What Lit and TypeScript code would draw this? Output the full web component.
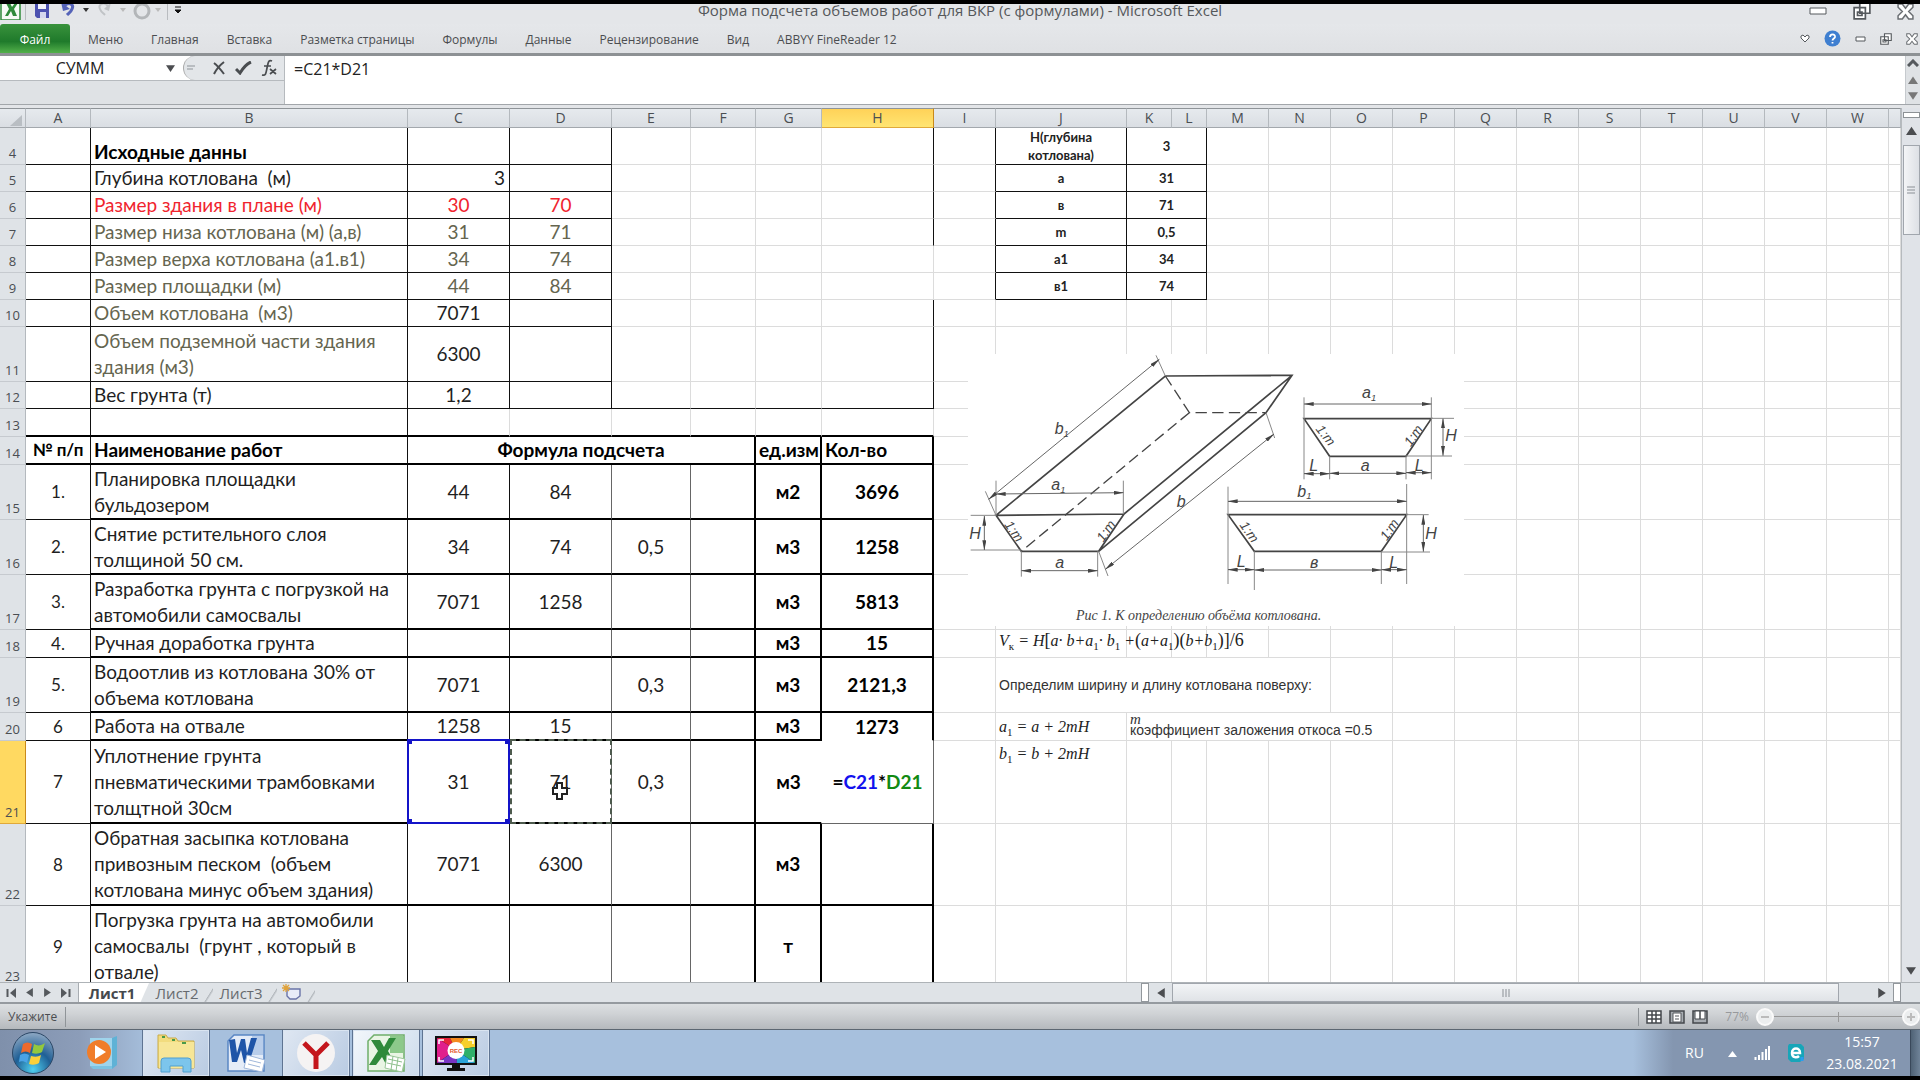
import { LitElement, html, css, svg, nothing } from "lit";
import { customElement } from "lit/decorators.js";

interface Cell {
  col: number;
  span?: number;
  text?: unknown;
  cls?: string;
}
interface Row {
  n: number;
  h: number;
  cells: Cell[];
}

const LETTERS = "ABCDEFGHIJKLMNOPQRSTUVW".split("");
const WIDTHS = [65, 317, 102, 102, 79, 65, 66, 112, 62, 131, 45, 35];
const widthOf = (i: number) => WIDTHS[i] ?? 62;

const side = (name: string, value: string, cls = "small"): Cell[] => [
  { col: 9, text: name, cls },
  { col: 10, span: 2, text: value, cls },
];
const given = (n: number, h: number, label: string, c: string, d: string, cls: string, extra: Cell[] = []): Row => ({
  n,
  h,
  cells: [
    { col: 1, text: label, cls: `label ${cls === "num" ? "olive" : cls}` },
    { col: 2, text: c, cls },
    { col: 3, text: d, cls },
    ...extra,
  ],
});
const work = (
  n: number,
  h: number,
  no: string,
  label: string,
  vals: [unknown, unknown, string],
  unit: string,
  qty: unknown,
  extra: Cell[] = []
): Row => ({
  n,
  h,
  cells: [
    { col: 0, text: no, cls: "no" },
    { col: 1, text: label, cls: "label" },
    { col: 2, text: vals[0] },
    { col: 3, text: vals[1] },
    { col: 4, text: vals[2] },
    { col: 6, text: unit, cls: "strong" },
    { col: 7, text: qty, cls: "strong" },
    ...extra,
  ],
});

const blueBox = html`31<span class="range"><i></i><i></i><i></i><i></i></span>`;
const antsBox = html`71<span class="ants"></span><svg class="cursor" viewBox="0 0 16 20" width="16" height="20" aria-hidden="true"><path d="M5 2h5v5h5v6h-5v5H5v-5H1V7h4z" fill="#fff" stroke="#222" stroke-width="2" /></svg>`;

const ROWS: Row[] = [
  {
    n: 4,
    h: 37,
    cells: [{ col: 1, text: "Исходные данны", cls: "label bold low" }, ...side("Н(глубина котлована)", "3")],
  },
  {
    n: 5,
    h: 27,
    cells: [
      { col: 1, text: "Глубина котлована  (м)", cls: "label" },
      { col: 2, text: "3", cls: "right" },
      ...side("а", "31"),
    ],
  },
  given(6, 27, "Размер здания в плане (м)", "30", "70", "red", side("в", "71")),
  given(7, 27, "Размер низа котлована (м) (а,в)", "31", "71", "olive", side("m", "0,5")),
  given(8, 27, "Размер верха котлована (а1.в1)", "34", "74", "olive", side("а1", "34")),
  given(9, 27, "Размер площадки (м)", "44", "84", "olive", side("в1", "74")),
  given(10, 27, "Объем котлована  (м3)", "7071", "", "num"),
  given(11, 55, "Объем подземной части здания\nздания (м3)", "6300", "", "num"),
  given(12, 27, "Вес грунта (т)", "1,2", "", ""),
  { n: 13, h: 28, cells: [] },
  {
    n: 14,
    h: 28,
    cells: [
      { col: 0, text: "№ п/п", cls: "no bold" },
      { col: 1, text: "Наименование работ", cls: "label bold" },
      { col: 2, span: 4, text: "Формула подсчета", cls: "bold" },
      { col: 6, text: "ед.изм", cls: "label bold" },
      { col: 7, text: "Кол-во", cls: "label bold" },
    ],
  },
  work(15, 55, "1.", "Планировка площадки\nбульдозером", ["44", "84", ""], "м2", "3696"),
  work(16, 55, "2.", "Снятие рстительного слоя\nтолщиной 50 см.", ["34", "74", "0,5"], "м3", "1258"),
  work(17, 55, "3.", "Разработка грунта с погрузкой на\nавтомобили самосвалы", ["7071", "1258", ""], "м3", "5813"),
  work(18, 28, "4.", "Ручная доработка грунта", ["", "", ""], "м3", "15", [
    {
      col: 9,
      cls: "math up",
      text: html`V<sub>к</sub> = H<b>[</b>a· b+a<sub>1</sub>· b<sub>1</sub> +<b>(</b>a+a<sub>1</sub><b>)(</b>b+b<sub>1</sub><b>)]/6</b>`,
    },
  ]),
  work(19, 55, "5.", "Водоотлив из котлована 30% от\nобъема котлована", ["7071", "", "0,3"], "м3", "2121,3", [
    { col: 9, span: 5, text: "Определим ширину и длину котлована поверху:", cls: "note" },
  ]),
  work(20, 28, "6", "Работа на отвале", ["1258", "15", ""], "м3", "1273", [
    { col: 9, cls: "math", text: html`a<sub>1</sub> = a + 2mH` },
    {
      col: 10,
      span: 5,
      cls: "note coef",
      text: html`<em>m</em><span>коэффициент заложения откоса =0.5</span>`,
    },
  ]),
  work(
    21,
    83,
    "7",
    "Уплотнение грунта\nпневматическими трамбовками\nтолщтной 30см",
    [blueBox, antsBox, "0,3"],
    "м3",
    html`=<span class="refc">C21</span>*<span class="refd">D21</span>`,
    [{ col: 9, cls: "math top", text: html`b<sub>1</sub> = b + 2mH` }]
  ),
  work(
    22,
    82,
    "8",
    "Обратная засыпка котлована\nпривозным песком  (объем\nкотлована минус объем здания)",
    ["7071", "6300", ""],
    "м3",
    ""
  ),
  work(23, 82, "9", "Погрузка грунта на автомобили\nсамосвалы  (грунт , который в\nотвале)", ["", "", ""], "т", ""),
];

/** Border classes for the right and bottom edge of a cell. */
function edges(n: number, col: number, span: number): string {
  const r = col + span - 1;
  let right = "";
  let bottom = "";
  if (n <= 12) {
    if (r <= 3) right = "rk";
    if (r === 7 && n !== 8 && n !== 9) right = "rk";
    if (n <= 9 && (r === 8 || r === 9 || r === 11)) right = "rk";
    if (col <= 3 || (n === 12 && col <= 7)) bottom = "bk";
    if (n <= 9 && col >= 9 && col <= 11) bottom = "bk";
  } else if (n === 13) {
    if (r <= 1) right = "rk";
    if (col <= 7) bottom = "bt";
  } else {
    if (r <= 2) right = "rk";
    else if (r <= 4) right = "rg";
    else if (r <= 7) right = "rt";
    if (col <= 7) bottom = col === 0 && n > 14 ? "bk" : "bt";
    if (n === 21 && r === 6) right = "rn";
    if (n === 21 && r === 7) right = "rg";
    if (n === 20 && col === 7) bottom = "bn";
    if (n === 21 && col === 7) bottom = "bg";
  }
  return `${right} ${bottom}`;
}

@customElement("sheet-grid")
export class SheetGrid extends LitElement {
  static styles = css`
    :host {
      display: block;
      position: relative;
      overflow: hidden;
      background: #fff;
      font-family: Lato, "Noto Sans", sans-serif;
    }
    table {
      width: 100%;
      table-layout: fixed;
      border-collapse: separate;
      border-spacing: 0;
    }
    th,
    td {
      box-sizing: border-box;
      padding: 0;
      overflow: hidden;
    }
    th {
      background: #dfe3e7;
      color: #4a4e52;
      font: 14px/18px "Open Sans", "Noto Sans", sans-serif;
      border-right: 1px solid #b4b9be;
      border-bottom: 1px solid #a3a8ad;
    }
    thead th {
      height: 20px;
      background: linear-gradient(#e6eaee, #dadee3);
      border-top: 1px solid #8f9498;
    }
    tbody th {
      vertical-align: bottom;
      padding-bottom: 2px;
      border-bottom-color: #c6cacf;
      font-size: 13px;
      text-align: center;
    }
    thead .on {
      background: linear-gradient(#ffd258, #ffe572);
      border-right-color: #c98a1b;
      border-bottom-color: #e0a93a;
    }
    tbody .on {
      background: #ffd961;
      border-right-color: #c98a1b;
      border-bottom-color: #e0a93a;
    }
    .corner svg {
      display: block;
      margin: 4px 3px 0 auto;
    }
    td {
      text-align: center;
      vertical-align: middle;
      font-size: 19px;
      line-height: 26px;
      color: #1f1f1f;
      white-space: pre;
      border-right: 1px solid #dcdcdc;
      border-bottom: 1px solid #dcdcdc;
    }
    .rk {
      border-right-color: #111;
    }
    .rg {
      border-right-color: #666;
    }
    .rt {
      border-right: 2px solid #000;
    }
    .rn {
      border-right-color: #fff;
    }
    .bk {
      border-bottom-color: #111;
    }
    .bg {
      border-bottom-color: #666;
    }
    .bt {
      border-bottom: 2px solid #000;
    }
    .bn {
      border-bottom-color: #fff;
    }
    .label {
      text-align: left;
      padding-left: 3px;
    }
    .bold,
    .strong {
      font-weight: 700;
      color: #000;
    }
    .low {
      vertical-align: bottom;
      line-height: 24px;
    }
    .right {
      text-align: right;
      padding-right: 4px;
    }
    .red {
      color: #f0242e;
    }
    .olive {
      color: #65654f;
    }
    .no {
      font-size: 17px;
    }
    td.small {
      font-size: 13px;
      line-height: 18px;
      font-weight: 700;
      color: #222;
      white-space: normal;
    }
    td.math {
      overflow: visible;
      text-align: left;
      white-space: nowrap;
      padding-left: 3px;
      font: italic 16px/20px "Liberation Serif", serif;
      color: #222;
    }
    td.top {
      vertical-align: top;
      padding-top: 3px;
    }
    td.up {
      vertical-align: top;
    }
    .math sub {
      font-size: 11px;
      line-height: 0;
      font-style: normal;
    }
    .math b {
      font-weight: 400;
      font-style: normal;
      font-size: 18px;
      line-height: 20px;
    }
    td.note {
      text-align: left;
      padding-left: 3px;
      font-family: "Liberation Sans", sans-serif;
      font-size: 14px;
      color: #333;
    }
    td.coef {
      line-height: 12px;
      vertical-align: top;
      padding-top: 2px;
    }
    .coef em {
      display: block;
      font: italic 15px/8px "Liberation Serif", serif;
    }
    .coef span {
      display: block;
      line-height: 14px;
    }
    .anchor {
      position: relative;
      overflow: visible;
    }
    .range {
      position: absolute;
      inset: -2px -1px -2px -1px;
      border: 2px solid #1414c8;
    }
    .range i {
      position: absolute;
      width: 5px;
      height: 5px;
      background: #1414c8;
    }
    .range i:nth-child(1) {
      left: -2px;
      top: -2px;
    }
    .range i:nth-child(2) {
      right: -2px;
      top: -2px;
    }
    .range i:nth-child(3) {
      left: -2px;
      bottom: -2px;
    }
    .range i:nth-child(4) {
      right: -2px;
      bottom: -2px;
    }
    .ants {
      position: absolute;
      inset: -2px -1px -2px 0;
      border: 2px dashed #4d5a4d;
    }
    .cursor {
      position: absolute;
      left: 42px;
      top: 40px;
    }
    .refc {
      color: #1212ee;
    }
    .refd {
      color: #128a12;
    }
    figure {
      position: absolute;
      left: 968px;
      top: 246px;
      width: 496px;
      margin: 0;
      background: #fff;
    }
    figure svg {
      display: block;
    }
    figcaption {
      padding: 14px 0 2px 108px;
      font: italic 14px/16px "Liberation Serif", serif;
      color: #444;
      white-space: nowrap;
    }
  `;

  private renderRow(row: Row) {
    const out: unknown[] = [];
    let col = 0;
    while (col < 24) {
      const cell = row.cells.find((c) => c.col === col);
      const span = cell?.span ?? 1;
      const anchored = row.n === 21 && (col === 2 || col === 3) ? "anchor" : "";
      out.push(
        html`<td colspan=${span} class="${edges(row.n, col, span)} ${cell?.cls ?? ""} ${anchored}">${cell?.text ?? nothing}</td>`
      );
      col += span;
    }
    return html`<tr style="height:${row.h}px">
      <th scope="row" class=${row.n === 21 ? "on" : ""}>${row.n}</th>
      ${out}
    </tr>`;
  }

  private drawing() {
    const lbl = (x: number, y: number, t: string, rot = 0, sub = "") =>
      svg`<text x=${x} y=${y} transform="rotate(${rot} ${x} ${y})" font-size=${t === "1:m" ? 40 : 48}>${t}${
        sub ? svg`<tspan font-size="28" dy="8">${sub}</tspan>` : nothing
      }</text>`;
    return html`<svg width="496" height="240" viewBox="24 40 1488 720" role="img" aria-label="Схема котлована">
      <defs>
        <marker id="ar" viewBox="0 0 30 12" refX="29" refY="6" markerWidth="30" markerHeight="12" markerUnits="userSpaceOnUse" orient="auto-start-reverse">
          <path d="M0 0L30 6L0 12z" fill="#444" />
        </marker>
      </defs>
      <g fill="none" stroke="#444" stroke-width="5">
        <path d="M108 524L492 520L416 632H184zM108 524L616 106L996 104L918 216L416 632M492 520L996 104" />
        <path d="M616 106L688 216H918M688 216L184 632" stroke-width="4" stroke-dasharray="34 16" />
        <path d="M1032 234H1414L1338 347H1109z" />
        <path d="M804 522H1340L1264 632H883z" />
      </g>
      <g fill="none" stroke="#888" stroke-width="3">
        <path d="M76 452L108 524M588 44L616 106M108 420V524M490 420V520M32 524H108M32 628H184M184 632V708M413 632V708M416 632L444 706M918 216L944 292" />
        <path d="M1032 170V416M1414 170V416M1109 347V416M1338 347V416M1414 233H1482M1338 346H1476M804 438V730M1340 430V730M883 632V748M1264 632V730M1340 522H1406M1264 634H1410" />
      </g>
      <g fill="none" stroke="#666" stroke-width="3" marker-start="url(#ar)" marker-end="url(#ar)">
        <path d="M86 476L598 56" />
        <path d="M436 686L942 280" />
        <path d="M108 460L490 456" />
        <path d="M184 690H413" />
        <path d="M73 526V628" />
        <path d="M1032 190H1414" />
        <path d="M1032 399H1109" />
        <path d="M1109 398H1338" />
        <path d="M1338 396H1414" />
        <path d="M1449 234V345" />
        <path d="M804 482H1340" />
        <path d="M804 687H883" />
        <path d="M883 688H1264" />
        <path d="M1264 687H1340" />
        <path d="M1390 523V633" />
      </g>
      <g fill="#444" font-family="Liberation Sans, sans-serif" font-style="italic">
        ${lbl(284, 280, "b", 0, "1")} ${lbl(274, 448, "a", 0, "1")} ${lbl(650, 500, "b")} ${lbl(286, 682, "a")}
        ${lbl(1206, 172, "a", 0, "1")} ${lbl(1202, 390, "a")} ${lbl(1048, 392, "L")} ${lbl(1364, 390, "L")}
        ${lbl(1012, 468, "b", 0, "1")} ${lbl(1050, 682, "в")} ${lbl(830, 680, "L")} ${lbl(1288, 682, "L")}
        ${lbl(132, 552, "1:m", 55)} ${lbl(430, 606, "1:m", -55)} ${lbl(1066, 266, "1:m", 52)} ${lbl(1352, 320, "1:m", -55)}
        ${lbl(838, 554, "1:m", 55)} ${lbl(1280, 602, "1:m", -55)} ${lbl(28, 596, "H")} ${lbl(1456, 300, "H")}
        ${lbl(1396, 596, "H")}
      </g>
    </svg>`;
  }

  render() {
    return html`<table>
        <colgroup>
          <col style="width:26px" />
          ${LETTERS.map((_, i) => html`<col style="width:${widthOf(i)}px" />`)}
          <col />
        </colgroup>
        <thead>
          <tr>
            <th class="corner" aria-label="Все">
              <svg width="12" height="11"><path d="M12 0V11H0z" fill="#b9bec3" /></svg>
            </th>
            ${LETTERS.map((l) => html`<th scope="col" class=${l === "H" ? "on" : ""}>${l}</th>`)}
            <th></th>
          </tr>
        </thead>
        <tbody>
          ${ROWS.map((r) => this.renderRow(r))}
        </tbody>
      </table>
      <figure>
        ${this.drawing()}
        <figcaption>Рис 1. К определению объёма котлована.</figcaption>
      </figure>`;
  }
}

const excelIcon = (s: number) => html`<svg width=${s} height=${s} viewBox="0 0 40 40" aria-hidden="true">
  <path d="M8 2H38V38H2V8z" fill="#e9f5e4" stroke="#6fae6a" stroke-width="1.5" />
  <path d="M24 3H37V20H24z" fill="#8cc98a" />
  <path d="M5 7H14L18 14L23 5H30L22 18L30 33H21L16 24L10 32H3L12 18z" fill="#2f8a3a" />
  <path d="M21 22L39 26L36 39L19 35z" fill="#fff" stroke="#9bc79a" />
  <path d="M22 26L36 29M21 30L35 33M27 23L25 37M32 25L30 38" stroke="#8fc18e" />
</svg>`;

@customElement("app-root")
export class AppRoot extends LitElement {
  static styles = css`
    :host {
      display: flex;
      flex-direction: column;
      box-sizing: border-box;
      height: 100vh;
      border-top: 4px solid #000;
      border-bottom: 4px solid #000;
      overflow: hidden;
      background: #e3e5e8;
      color: #4b4d50;
      font-family: "Open Sans", "Noto Sans", sans-serif;
    }
    button {
      border: 0;
      padding: 0;
      margin: 0;
      background: none;
      color: inherit;
      font: inherit;
      display: flex;
      align-items: center;
      justify-content: center;
    }
    svg {
      display: block;
      flex: none;
    }
    .titlebar {
      flex: none;
      height: 20px;
      display: grid;
      grid-template-columns: 1fr auto 1fr;
      background: #e4e6e9;
    }
    .quick {
      display: flex;
      align-items: flex-start;
    }
    h1 {
      margin: 0;
      font-size: 15px;
      line-height: 12px;
      font-weight: 400;
      color: #55585b;
    }
    .wins {
      display: flex;
      justify-content: flex-end;
      height: 14px;
      gap: 26px;
      padding-right: 6px;
    }
    .ribbon {
      flex: none;
      height: 29px;
      display: flex;
      align-items: stretch;
      border-bottom: 3px solid #8d9194;
      background: linear-gradient(#e5e7ea, #dfe1e4);
      font-size: 12px;
    }
    .ribbon nav {
      display: flex;
      gap: 28px;
    }
    .ribbon nav button {
      padding-top: 2px;
    }
    .ribbon .file {
      width: 70px;
      margin-right: -10px;
      color: #fff;
      background: linear-gradient(#39923c, #1f7a2b 60%, #52b04a);
      border-radius: 3px 3px 0 0;
    }
    .tools {
      margin-left: auto;
      display: flex;
      align-items: center;
      gap: 14px;
      padding-right: 2px;
    }
    .fbar {
      flex: none;
      height: 48px;
      display: grid;
      grid-template-columns: 284px 1fr 15px;
      border-bottom: 1px solid #a2a6aa;
      margin-bottom: 3px;
      background: #dfe2e5;
    }
    .namerow {
      height: 24px;
      display: flex;
      border-bottom: 1px solid #b6babe;
      align-items: stretch;
    }
    .namebox {
      display: flex;
      align-items: center;
      width: 190px;
      background: #fff;
    }
    .namebox input {
      width: 166px;
      box-sizing: border-box;
      border: 0;
      padding: 0 6px 0 0;
      text-align: center;
      background: none;
      color: #222;
      font: 16px/20px "Open Sans", sans-serif;
    }
    .fx {
      display: flex;
      flex: 1;
      align-items: center;
      justify-content: flex-end;
      gap: 9px;
      margin-left: -7px;
      padding-right: 6px;
      color: #444;
      border-radius: 12px 0 0 12px;
      background: #e3e6e9;
      border-left: 1px solid #aaa;
    }
    .grip {
      margin-right: auto;
      padding-left: 3px;
    }
    textarea {
      border: 0;
      border-left: 1px solid #b6babe;
      outline: 0;
      resize: none;
      margin: 0;
      padding: 3px 9px;
      background: #fff;
      color: #222;
      font: 16px/20px "Open Sans", sans-serif;
      overflow: hidden;
    }
    .fend {
      display: flex;
      flex-direction: column;
      justify-content: space-around;
      align-items: center;
      border-left: 1px solid #c6cace;
      color: #777;
    }
    .work {
      flex: 1;
      min-height: 0;
      display: flex;
    }
    sheet-grid {
      flex: 1;
      min-width: 0;
    }
    .vscroll {
      width: 19px;
      flex: none;
      background: #e0e3e8;
      border-left: 1px solid #b6babe;
      box-sizing: border-box;
      display: flex;
      flex-direction: column;
      align-items: center;
      padding-top: 4px;
    }
    .split {
      width: 17px;
      height: 6px;
      background: #fff;
      border: 1px solid #8c9195;
      box-sizing: border-box;
    }
    .vthumb {
      width: 17px;
      height: 90px;
      box-sizing: border-box;
      background: linear-gradient(90deg, #f4f5f7, #dde0e5);
      border: 1px solid #a1a6ad;
      display: flex;
      align-items: center;
      justify-content: center;
    }
    .vscroll .up {
      height: 27px;
      padding-bottom: 4px;
      box-sizing: border-box;
    }
    .vscroll .down {
      margin-top: auto;
      height: 22px;
    }
    .bottom {
      flex: none;
      height: 22px;
      box-sizing: border-box;
      border-top: 1px solid #aeb3b7;
      border-bottom: 2px solid #959a9f;
      display: flex;
      background: #dfe3e7;
    }
    .nav {
      width: 79px;
      box-sizing: border-box;
      display: flex;
      justify-content: space-between;
      padding: 0 7px 0 6px;
      border-right: 1px solid #a8adb2;
      color: #55595d;
    }
    .tabs {
      display: flex;
      font-size: 15px;
      line-height: 18px;
      color: #666a6e;
    }
    .tabs button {
      width: 64px;
      height: 19px;
      padding-right: 8px;
      box-sizing: border-box;
      background: linear-gradient(122deg, transparent 88%, #b1b6bb 89%, transparent 92%);
    }
    .tabs .cur {
      width: 70px;
      padding: 0 4px 0 0;
      font-weight: 700;
      color: #45494d;
      background: #fff;
      clip-path: polygon(0 0, 100% 0, 88% 100%, 0 100%);
    }
    .tabs .new {
      width: 38px;
      background: linear-gradient(122deg, transparent 84%, #b1b6bb 86%, transparent 90%);
    }
    .hscroll {
      margin-left: auto;
      width: 779px;
      display: flex;
      align-items: center;
    }
    .hsplit {
      width: 8px;
      height: 19px;
      box-sizing: border-box;
      background: #fff;
      border: 1px solid #92979c;
    }
    .hscroll button {
      width: 23px;
      height: 19px;
    }
    .hthumb {
      flex: 1;
      height: 19px;
      box-sizing: border-box;
      margin-right: 31px;
      display: flex;
      align-items: center;
      justify-content: center;
      border: 1px solid #a1a6ad;
      background: linear-gradient(#f2f4f6, #e0e3e7);
    }
    .corner {
      width: 19px;
      background: #e0e3e7;
    }
    .status {
      flex: none;
      height: 26px;
      box-sizing: border-box;
      display: flex;
      align-items: center;
      background: linear-gradient(#dcdfe1, #cfd2d5 40%, #b5b9bd);
      border-bottom: 1px solid #5c6772;
      font-size: 12px;
      padding-left: 8px;
    }
    .mode {
      width: 57px;
      border-right: 1px solid #8f9498;
      line-height: 20px;
    }
    .views {
      margin-left: auto;
      border-left: 1px solid #8f9498;
      padding-left: 7px;
      display: flex;
      align-items: center;
      gap: 7px;
    }
    .pct {
      color: #97999c;
      padding-left: 10px;
    }
    .zoom {
      display: flex;
      align-items: center;
    }
    .track {
      appearance: none;
      width: 128px;
      height: 18px;
      margin: 0;
      background: linear-gradient(#999, #999) center / 100% 1px no-repeat, linear-gradient(#999, #999) center / 1px 10px no-repeat;
    }
    .track::-webkit-slider-thumb {
      appearance: none;
      width: 1px;
      height: 1px;
    }
    .taskbar {
      flex: none;
      height: 46px;
      display: flex;
      align-items: stretch;
      background: linear-gradient(90deg, #7f90ab, #8c9db9 80px, #a7c0dd 150px);
    }
    .taskbar button {
      box-sizing: border-box;
    }
    .start {
      width: 66px;
    }
    .wmp {
      width: 76px;
      padding-right: 4px;
    }
    .app {
      width: 68px;
      margin-right: 2px;
    }
    .open {
      border: 1px solid #5f7492;
      border-top: 0;
      border-bottom: 0;
      background: linear-gradient(120deg, #dfe7f2, #b9cbe2);
      box-shadow: inset 0 0 0 1px #d9e4f1;
    }
    .live {
      background: linear-gradient(120deg, #f3f7fb, #cddcec);
    }
    .tray {
      margin-left: auto;
      display: flex;
      align-items: center;
      color: #fff;
      padding-left: 52px;
      background: linear-gradient(90deg, #a7c0dd, #8496b0 40px);
      font-size: 14px;
    }
    .lang {
      width: 43px;
      padding-bottom: 2px;
    }
    .tray svg + svg {
      margin-left: 17px;
    }
    .clock {
      width: 96px;
      margin-left: 9px;
      text-align: center;
      font-size: 14px;
      line-height: 22px;
    }
    .desk {
      width: 9px;
      align-self: stretch;
      background: linear-gradient(90deg, #4f6275, #6f8398);
      border-left: 1px solid #39485a;
    }
  `;

  private tri(dir: "u" | "d" | "l" | "r", s = 8) {
    const d = { u: "M0 8L4 2L8 8z", d: "M0 1L4 7L8 1z", l: "M7 0L1 4L7 8z", r: "M1 0L7 4L1 8z" }[dir];
    return html`<svg width=${s} height=${s} viewBox="0 0 8 8" aria-hidden="true"><path d=${d} fill="currentColor" /></svg>`;
  }

  private restore(s: number) {
    return html`<svg width=${s} height=${s} viewBox="0 0 16 16" aria-hidden="true">
      <path d="M6 1H15V10H6zM1 5H11V15H1z" fill="#fff" stroke="#55595d" stroke-width="1.5" />
      <path d="M4 9H8V12H4z" fill="none" stroke="#55595d" stroke-width="1.5" />
    </svg>`;
  }

  private cross(s: number) {
    return html`<svg width=${s} height=${s} viewBox="0 0 16 16" aria-hidden="true">
      <path d="M1 1H5L8 5L11 1H15V4L11 8L15 12V15H11L8 11L5 15H1V12L5 8L1 4z" fill="#fff" stroke="#6a6e72" stroke-width="1.4" />
    </svg>`;
  }

  render() {
    const tabs = ["Меню", "Главная", "Вставка", "Разметка страницы", "Формулы", "Данные", "Рецензирование", "Вид", "ABBYY FineReader 12"];
    return html`
      <header class="titlebar">
        <div class="quick">
          <svg width="186" height="16" viewBox="0 4 186 16" aria-hidden="true">
            <path d="M1 0H20V20H1z" fill="#f6faf5" stroke="#2f8a3a" stroke-width="1.5" />
            <path d="M5 16L9 9L6 3H10L12 7L15 3H18L14 9L17 16H13L11 11L8 16z" fill="#2f8a3a" />
            <path d="M25.500 2V20M167.500 2V20" stroke="#b9bcc0" />
            <path d="M35 1H49V18H37L35 16z" fill="#4d52b0" />
            <path d="M38 1H46V9H38z" fill="#f3f4fb" />
            <path d="M40 12H46V18H40z" fill="#d5d7ee" />
            <path d="M64 6C70 1 74 5 72 9C71 12 69 13 67 15" fill="none" stroke="#5563b8" stroke-width="3" />
            <path d="M61 2L63 11L70 9z" fill="#5563b8" />
            <path d="M83 8H89L86 12z" fill="#333" />
            <path d="M108 6C103 1 98 5 100 9C101 12 103 13 105 15" fill="none" stroke="#c0c3c6" stroke-width="2" />
            <path d="M111 2L109 11L104 9z" fill="#c0c3c6" />
            <path d="M120 8H126L123 12zM155 8H161L158 12z" fill="#bbb" />
            <circle cx="142" cy="11" r="7" fill="none" stroke="#b3b6b9" stroke-width="3" />
            <path d="M175 7H181M175 10H181L178 13z" stroke="#111" fill="#111" />
          </svg>
        </div>
        <h1>Форма подсчета объемов работ для ВКР (с формулами) - Microsoft Excel</h1>
        <div class="wins">
          <button aria-label="Свернуть">
            <svg width="18" height="8"><path d="M1 1H17V7H1z" fill="#fff" stroke="#55595d" /></svg>
          </button>
          <button aria-label="Окно">${this.restore(18)}</button>
          <button aria-label="Закрыть">${this.cross(17)}</button>
        </div>
      </header>
      <div class="ribbon">
        <nav>
          <button class="file">Файл</button>
          ${tabs.map((t) => html`<button>${t}</button>`)}
        </nav>
        <div class="tools">
          <button aria-label="Лента">
            <svg width="10" height="9"><path d="M1 2L3 1L5 3L7 1L9 2V4L5 8L1 4z" fill="#fff" stroke="#55595d" /></svg>
          </button>
          <button aria-label="Справка">
            <svg width="17" height="17" viewBox="0 0 17 17">
              <circle cx="8.500" cy="8.500" r="8" fill="#3f7fd0" />
              <path d="M6 7C6 3.500 11.500 3.500 11 7C10.700 8.500 8.500 8.500 8.500 10.500M8.500 12V13.500" fill="none" stroke="#fff" stroke-width="1.800" />
            </svg>
          </button>
          <button aria-label="Свернуть книгу">
            <svg width="11" height="6"><path d="M1 1H10V5H1z" fill="#fff" stroke="#55595d" /></svg>
          </button>
          <button aria-label="Восстановить книгу">${this.restore(12)}</button>
          <button aria-label="Закрыть книгу">${this.cross(12)}</button>
        </div>
      </div>
      <div class="fbar">
        <div>
          <div class="namerow">
            <div class="namebox"><input aria-label="Имя" value="СУММ" /><button aria-label="Список имён">${this.tri("d", 9)}</button></div>
            <div class="fx">
              <span class="grip"><svg width="8" height="8"><path d="M0 2H8M0 5H6" stroke="#b9bdc1" stroke-width="2" /></svg></span>
              <button aria-label="Отмена">
                <svg width="14" height="14"><path d="M2 2C6 5 9 9 12 13M12 1C8 4 4 9 2 13" fill="none" stroke="#4a4d50" stroke-width="2" /></svg>
              </button>
              <button aria-label="Ввод">
                <svg width="17" height="14"><path d="M1 8L5 12C8 7 11 3 16 1" fill="none" stroke="#4a4d50" stroke-width="3" /></svg>
              </button>
              <button aria-label="Вставить функцию">
                <svg width="17" height="18" viewBox="0 0 17 18">
                  <path d="M11 2C7 0 7 5 6 9C5 14 5 17 1 16M3 7H10M9 10L15 15M15 10L9 15" fill="none" stroke="#4a4d50" stroke-width="1.700" />
                </svg>
              </button>
            </div>
          </div>
        </div>
        <textarea aria-label="Строка формул" .value=${"=C21*D21"}></textarea>
        <div class="fend">
          <svg width="12" height="8"><path d="M1 7L6 2L11 7" fill="none" stroke="#55595d" stroke-width="3" /></svg>
          ${this.tri("u", 10)} ${this.tri("d", 10)}
        </div>
      </div>
      <main class="work">
        <sheet-grid></sheet-grid>
        <div class="vscroll">
          <div class="split"></div>
          <button class="up" aria-label="Вверх">${this.tri("u", 11)}</button>
          <div class="vthumb"><svg width="8" height="8"><path d="M0 1H8M0 4H8M0 7H8" stroke="#8a8f95" /></svg></div>
          <button class="down" aria-label="Вниз">${this.tri("d", 10)}</button>
        </div>
      </main>
      <div class="bottom">
        <div class="nav">
          <button aria-label="Первый"><svg width="11" height="10"><path d="M1.500 1V9" stroke="currentColor" stroke-width="2" /><path d="M10 0V10L4 5z" fill="currentColor" /></svg></button>
          <button aria-label="Предыдущий">${this.tri("l", 9)}</button>
          <button aria-label="Следующий">${this.tri("r", 9)}</button>
          <button aria-label="Последний"><svg width="11" height="10"><path d="M9.500 1V9" stroke="currentColor" stroke-width="2" /><path d="M1 0V10L7 5z" fill="currentColor" /></svg></button>
        </div>
        <div class="tabs">
          <button class="cur">Лист1</button>
          <button>Лист2</button>
          <button>Лист3</button>
          <button class="new" aria-label="Вставить лист">
            <svg width="20" height="17" viewBox="0 0 20 17">
              <path d="M5 5H18V12L14 15H8L5 12z" fill="#e8ecf8" stroke="#6a74a8" stroke-width="1.400" />
              <path d="M4 0V8M0 4H8M1 1L7 7M7 1L1 7" stroke="#e0a33c" stroke-width="1.300" />
            </svg>
          </button>
        </div>
        <div class="hscroll">
          <div class="hsplit"></div>
          <button aria-label="Влево">${this.tri("l", 10)}</button>
          <div class="hthumb"><svg width="8" height="8"><path d="M1 0V8M4 0V8M7 0V8" stroke="#8a8f95" /></svg></div>
          <button aria-label="Вправо">${this.tri("r", 10)}</button>
          <div class="hsplit"></div>
          <div class="corner"></div>
        </div>
      </div>
      <footer class="status">
        <span class="mode">Укажите</span>
        <div class="views">
          <button aria-label="Обычный">
            <svg width="16" height="14"><path d="M1 1H15V13H1zM1 5H15M1 9H15M6 1V13M10 1V13" fill="#fff" stroke="#44484c" stroke-width="1.500" /></svg>
          </button>
          <button aria-label="Разметка">
            <svg width="16" height="14"><path d="M1 1H15V13H1z" fill="#a8adb2" stroke="#44484c" stroke-width="1.500" /><path d="M4 3H12V12H4zM6 6H10M6 9H10" fill="#fff" stroke="#55595d" /></svg>
          </button>
          <button aria-label="Страничный">
            <svg width="16" height="14"><path d="M1 1H15V13H1z" fill="#a8adb2" stroke="#44484c" stroke-width="1.500" /><path d="M3 1H8V9H3zM8 1H13V9H8z" fill="#fff" stroke="#44484c" /></svg>
          </button>
          <span class="pct">77%</span>
          <div class="zoom">
            <button aria-label="Уменьшить"><svg width="18" height="18"><circle cx="9" cy="9" r="8" fill="#eceeef" stroke="#fafafa" stroke-width="2" /><path d="M5 9H13" stroke="#bbb" stroke-width="2" /></svg></button>
            <input class="track" type="range" aria-label="Масштаб" />
            <button aria-label="Увеличить"><svg width="18" height="18"><circle cx="9" cy="9" r="8" fill="#eceeef" stroke="#fafafa" stroke-width="2" /><path d="M5 9H13M9 5V13" stroke="#bbb" stroke-width="2" /></svg></button>
          </div>
        </div>
      </footer>
      <div class="taskbar">
        <button class="start" aria-label="Пуск">
          <svg width="44" height="44" viewBox="0 0 44 44">
            <defs><radialGradient id="orb" cx=".5" cy=".9" r=".9"><stop offset="0" stop-color="#4fd0f0" /><stop offset=".5" stop-color="#1f5f95" /><stop offset="1" stop-color="#8fa9c4" /></radialGradient></defs>
            <circle cx="22" cy="22" r="20.500" fill="url(#orb)" stroke="#2b4766" />
            <path d="M12 13C15 11 18 11 21 13L19 22C16 20 13 20 10 22z" fill="#ee6a2c" />
            <path d="M23 13C26 15 30 15 34 12L31 21C28 23 24 23 21 22z" fill="#93c83e" />
            <path d="M9 24C12 22 15 22 18 24L16 32C13 30 10 30 8 31z" fill="#4aa3e6" />
            <path d="M20 25C24 26 27 26 30 24L28 32C25 34 21 34 18 33z" fill="#fbd03a" />
          </svg>
        </button>
        <button class="wmp" aria-label="Проигрыватель">
          <svg width="34" height="36" viewBox="0 0 34 36">
            <path d="M5 3H27V31H5z" fill="#9fd4ec" /><path d="M27 3L32 1V30L27 34z" fill="#5fb2d6" /><path d="M5 31H27V34H8z" fill="#7cc3e2" />
            <circle cx="14" cy="17" r="12" fill="#f07d2a" /><path d="M10 10L21 17L10 24z" fill="#fff" />
          </svg>
        </button>
        <button class="app open" aria-label="Проводник">
          <svg width="44" height="42" viewBox="0 0 44 42">
            <path d="M4 3H12L14 6H22L24 9H40V36H4z" fill="#f2dc7e" stroke="#c9ab48" /><path d="M5 10H40V36H5z" fill="#f7e697" />
            <path d="M8 5H11M18 8H21M28 11H32" stroke="#4a9a4a" stroke-width="2" />
            <path d="M7 40V29Q7 26 10 26H34Q37 26 37 29V40H29V34H16V40z" fill="#7cc5ec" stroke="#4f9fd0" />
          </svg>
        </button>
        <button class="app" aria-label="Word">
          <svg width="40" height="40" viewBox="0 0 40 40">
            <path d="M8 2H38V38H2V8z" fill="#e4ecf8" stroke="#5a86c4" stroke-width="1.500" />
            <path d="M26 3H37V22H26z" fill="#b8cdea" />
            <path d="M3 7L9 6L11 20L15 6H19L21 20L25 5H31L23 30H18L15 17L11 29H6z" fill="#1f55a8" />
            <path d="M21 22L39 27L36 39L18 35z" fill="#fff" stroke="#9fb7da" /><path d="M23 27L35 30M22 31L34 34" stroke="#9fb7da" />
          </svg>
        </button>
        <button class="app open" aria-label="Яндекс">
          <svg width="40" height="40" viewBox="0 0 40 40"><circle cx="20" cy="20" r="19" fill="#f5f3f3" /><path d="M8 10L20 22L32 10M20 21V36" fill="none" stroke="#c4161c" stroke-width="5" /></svg>
        </button>
        <button class="app open live" aria-label="Excel">${excelIcon(40)}</button>
        <button class="app open" aria-label="Запись экрана">
          <svg width="42" height="36" viewBox="0 0 42 36">
            <path d="M0 1H42V30H0z" fill="#111" /><path d="M2 3H15L21 15z" fill="#e8243c" /><path d="M2 3L21 15L2 28z" fill="#e01e8c" /><path d="M15 3H29L21 15z" fill="#f58a1f" /><path d="M29 3H40V12L21 15z" fill="#f6cf2a" /><path d="M40 12V28L21 15z" fill="#2fb06a" /><path d="M2 28L21 15L22 28z" fill="#7a35c4" /><path d="M22 28L21 15L40 28z" fill="#2aa4d8" />
            <circle cx="21" cy="15.500" r="8.500" fill="#fff" />
            <text x="21" y="18" font-size="6" font-weight="700" fill="#e4572e" text-anchor="middle" font-family="Liberation Sans, sans-serif">REC</text>
            <path d="M4 9V5H9M33 5H38V9M4 22V26H9M33 26H38V22" fill="none" stroke="#fff" stroke-width="1.500" />
            <path d="M17 30H25V33H30V36H12V33H17z" fill="#111" />
          </svg>
        </button>
        <div class="tray">
          <span class="lang">RU</span>
          <svg width="9" height="7"><path d="M0 7L4.500 1L9 7z" fill="#fff" /></svg>
          <svg width="16" height="14"><path d="M1.500 14V11M5 14V9M8.500 14V6M12 14V3M15 14V0" stroke="#fff" stroke-width="2" /></svg>
          <svg width="18" height="20" viewBox="0 0 18 20"><path d="M2 1H14L17 4V16L13 19H4L1 16V3z" fill="#18a5b8" /><path d="M5 10H13C13 4 5 4 5 10C5 15 10 15 12 13" fill="none" stroke="#fff" stroke-width="2.500" /><path d="M15 14V18" stroke="#2a9df0" stroke-width="3" /></svg>
          <div class="clock">15:57<br />23.08.2021</div>
          <div class="desk"></div>
        </div>
      </div>
    `;
  }
}
